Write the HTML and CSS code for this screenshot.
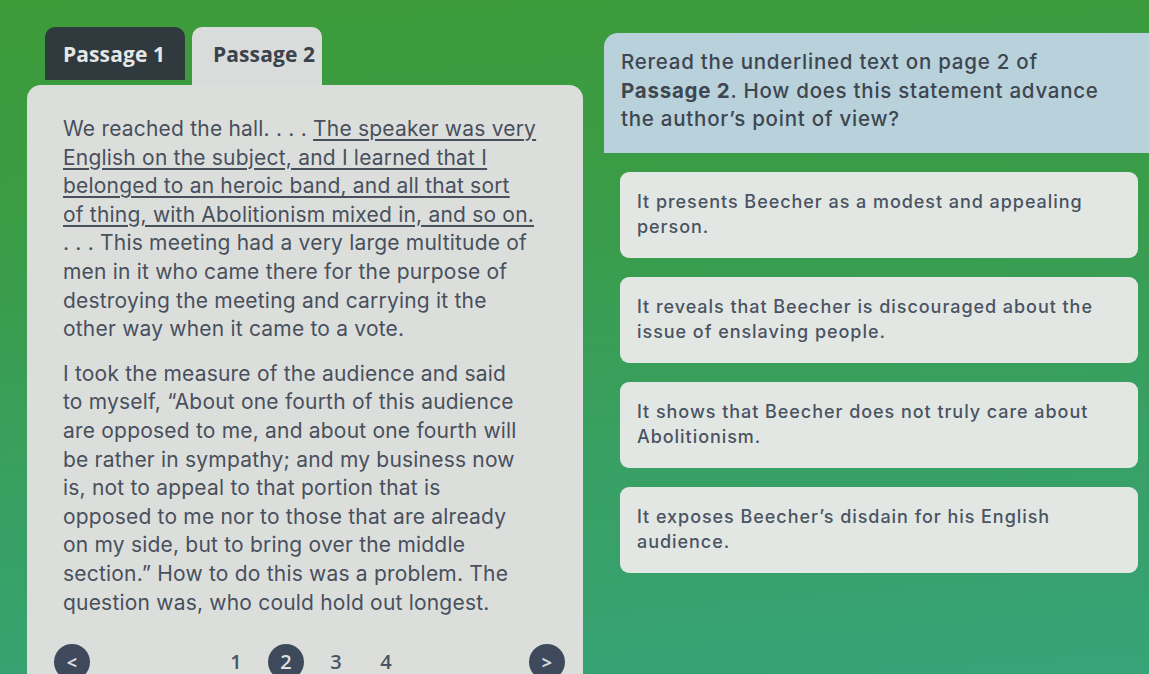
FILE: index.html
```html
<!DOCTYPE html>
<html lang="en">
<head>
<meta charset="utf-8">
<title>Passage question</title>
<link rel="stylesheet" href="styles.css">
</head>
<body>
<div class="screen">
  <section class="reader">
    <div class="tabs">
      <div class="tab tab-inactive">Passage 1</div>
      <div class="tab tab-active">Passage 2</div>
    </div>
    <div class="panel">
      <p class="para">We reached the hall. . . . <u>The speaker was very</u><br><u>English on the subject, and I learned that I</u><br><u>belonged to an heroic band, and all that sort</u><br><u>of thing, with Abolitionism mixed in, and so on.</u><br>. . . This meeting had a very large multitude of<br>men in it who came there for the purpose of<br>destroying the meeting and carrying it the<br>other way when it came to a vote.</p>
      <p class="para">I took the measure of the audience and said<br>to myself, “About one fourth of this audience<br>are opposed to me, and about one fourth will<br>be rather in sympathy; and my business now<br>is, not to appeal to that portion that is<br>opposed to me nor to those that are already<br>on my side, but to bring over the middle<br>section.” How to do this was a problem. The<br>question was, who could hold out longest.</p>
      <nav class="pager">
        <span class="dot pager-btn">&lt;</span>
        <div class="pages">
          <span class="page">1</span>
          <span class="page dot">2</span>
          <span class="page">3</span>
          <span class="page">4</span>
        </div>
        <span class="dot pager-btn pager-next">&gt;</span>
      </nav>
    </div>
  </section>
  <section class="quiz">
    <div class="question">Reread the underlined text on page 2 of<br><b>Passage 2</b>. How does this statement advance<br>the author’s point of view?</div>
    <div class="options">
      <div class="option">It presents Beecher as a modest and appealing<br>person.</div>
      <div class="option">It reveals that Beecher is discouraged about the<br>issue of enslaving people.</div>
      <div class="option">It shows that Beecher does not truly care about<br>Abolitionism.</div>
      <div class="option">It exposes Beecher’s disdain for his English<br>audience.</div>
    </div>
  </section>
</div>
</body>
</html>
```

FILE: styles.css
```css
html, body {
  margin: 0;
  padding: 0;
}
body {
  width: 1149px;
  height: 674px;
  overflow: hidden;
  background: linear-gradient(175deg, #3d9b38 0%, #3a9c46 30%, #38a062 65%, #37a378 100%);
  font-family: Inter, "Open Sans", sans-serif;
}
.screen {
  display: flex;
  align-items: flex-start;
  height: 674px;
}
.reader {
  width: 556px;
  margin-left: 27px;
  margin-top: 27px;
  flex-shrink: 0;
}
.tabs {
  display: flex;
  align-items: flex-start;
  padding-left: 18px;
  gap: 7px;
}
.tab {
  font-family: "Open Sans", sans-serif;
  font-weight: 700;
  font-size: 21px;
  letter-spacing: 0.1px;
  box-sizing: border-box;
  padding-left: 18px;
  padding-top: 13px;
  border-radius: 10px 10px 0 0;
}
.tab-inactive {
  width: 140px;
  height: 53px;
  background: #2f393e;
  color: #e4e7e6;
}
.tab-active {
  width: 130px;
  height: 58px;
  padding-left: 21px;
  background: #dadcdb;
  color: #3a434c;
}
.panel {
  background: #dcdedc;
  border-radius: 14px 14px 0 0;
  padding: 30px 0 0 36px;
  height: 620px;
  box-sizing: border-box;
}
.para {
  margin: 0 0 16px 0;
  font-size: 21px;
  line-height: 28.6px;
  color: #48505c;
  white-space: nowrap;
  letter-spacing: 0.2px;
}
.para u {
  text-decoration-thickness: 1.5px;
  text-underline-offset: 3px;
}
.pager {
  display: flex;
  align-items: center;
  margin-top: 34px;
  margin-left: -9px;
  width: 511px;
  color: #4a5563;
  font-family: "Open Sans", sans-serif;
  font-weight: 600;
  font-size: 20px;
  line-height: 22px;
}
.pager-btn,
.page {
  width: 36px;
  height: 22px;
  text-align: center;
}
.pager-btn {
  color: #d7dbe0;
  font-size: 18px;
  font-weight: 700;
}
.dot {
  position: relative;
  z-index: 0;
}
.dot::before {
  content: "";
  position: absolute;
  left: 0;
  top: -7px;
  width: 36px;
  height: 36px;
  border-radius: 50%;
  background: #3e4a5b;
  z-index: -1;
}
.page.dot {
  color: #dde1e5;
}
.pager-next {
  margin-left: auto;
}
.pages {
  display: flex;
  gap: 14px;
  align-items: center;
  margin-left: 128px;
}
.quiz {
  margin-left: 21px;
  margin-top: 33px;
  flex-shrink: 0;
}
.question {
  width: 560px;
  height: 120px;
  box-sizing: border-box;
  padding: 15px 0 0 17px;
  background: #b9d1da;
  border-radius: 14px 0 0 0;
  font-size: 20.5px;
  font-weight: 500;
  letter-spacing: 0.75px;
  line-height: 28.6px;
  color: #3d4651;
  white-space: nowrap;
}
.question b {
  font-weight: 700;
}
.options {
  display: flex;
  flex-direction: column;
  gap: 19px;
  margin-top: 19px;
  margin-left: 16px;
}
.option {
  width: 518px;
  height: 86px;
  box-sizing: border-box;
  padding: 17px 0 0 17px;
  background: #e2e7e4;
  border-radius: 9px;
  font-size: 18px;
  font-weight: 500;
  letter-spacing: 0.95px;
  line-height: 25px;
  color: #4a5362;
  white-space: nowrap;
}
```
